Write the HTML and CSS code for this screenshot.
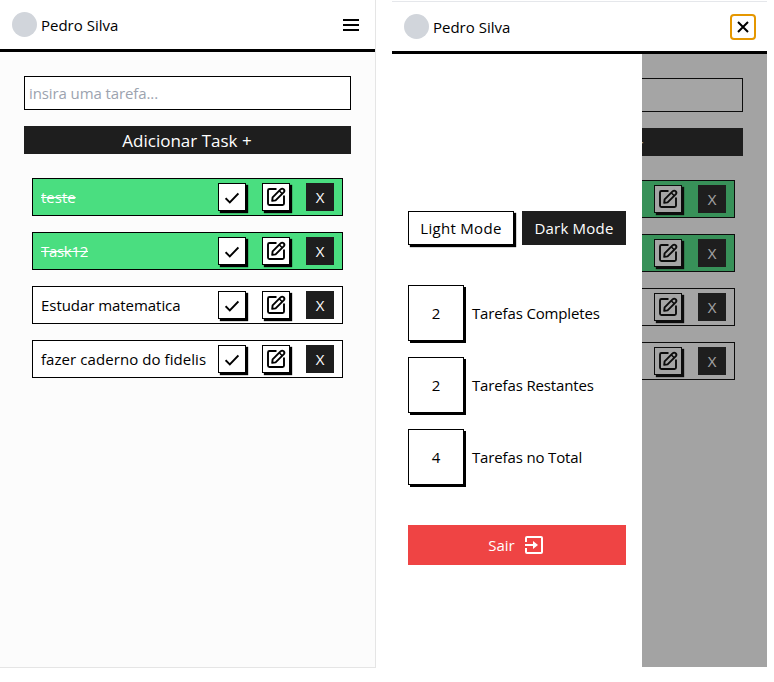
FILE: index.html
```html
<!DOCTYPE html>
<html lang="pt-BR">
<head>
<meta charset="utf-8">
<title>Tarefas</title>
<link rel="stylesheet" href="styles.css">
</head>
<body>
<svg class="defs" aria-hidden="true">
  <symbol id="check" viewBox="0 0 14 12"><path d="M.6 6.200l4.200 4.200L13.400 1.400" fill="none" stroke="currentColor" stroke-width="1.900"/></symbol>
  <symbol id="edit" viewBox="0 0 20 20"><g fill="none" stroke="currentColor" stroke-width="1.900" stroke-linejoin="round"><path d="M10.500 2H3.500Q2 2 2 3.500V16.500Q2 18 3.500 18H16.500Q18 18 18 16.500V8.500"/><path d="M6.200 13.800l.4-3.400 8.200-8.200Q16.200 1 17.600 2.300T17.900 5.100L9.600 13.400z"/><path d="M13.200 3.800l3 3" stroke-width="1.500"/></g></symbol>
</svg>
<main class="screens">
  <section class="phone phone-list">
    <header class="header">
      <span class="avatar"></span><span class="name">Pedro Silva</span>
      <button class="menu" aria-label="Menu"><i></i><i></i><i></i></button>
    </header>
    <div class="content">
      <input class="entry" placeholder="insira uma tarefa...">
      <button class="add"><span>Adicionar Task +</span></button>
      <ul class="tasks">
        <li class="task done"><span class="title">teste</span><button class="tool"><svg class="i-check"><use href="#check"/></svg></button><button class="tool"><svg class="i-edit"><use href="#edit"/></svg></button><button class="del">X</button></li>
        <li class="task done"><span class="title tight">Task12</span><button class="tool"><svg class="i-check"><use href="#check"/></svg></button><button class="tool"><svg class="i-edit"><use href="#edit"/></svg></button><button class="del">X</button></li>
        <li class="task"><span class="title snug">Estudar matematica</span><button class="tool"><svg class="i-check"><use href="#check"/></svg></button><button class="tool"><svg class="i-edit"><use href="#edit"/></svg></button><button class="del">X</button></li>
        <li class="task"><span class="title wide">fazer caderno do fidelis</span><button class="tool"><svg class="i-check"><use href="#check"/></svg></button><button class="tool"><svg class="i-edit"><use href="#edit"/></svg></button><button class="del">X</button></li>
      </ul>
    </div>
  </section>
  <section class="phone phone-drawer">
    <header class="header">
      <span class="avatar"></span><span class="name">Pedro Silva</span>
      <button class="close" aria-label="Fechar"><svg viewBox="0 0 12 12"><path d="M1 1l10 10M11 1L1 11" stroke="#000" stroke-width="2"/></svg></button>
    </header>
    <div class="content">
      <div class="entry"></div>
      <div class="add"><span>Adicionar Task +</span></div>
      <ul class="tasks">
        <li class="task done"><span class="title"></span><button class="tool"><svg class="i-edit"><use href="#edit"/></svg></button><button class="del">X</button></li>
        <li class="task done"><span class="title"></span><button class="tool"><svg class="i-edit"><use href="#edit"/></svg></button><button class="del">X</button></li>
        <li class="task"><span class="title"></span><button class="tool"><svg class="i-edit"><use href="#edit"/></svg></button><button class="del">X</button></li>
        <li class="task"><span class="title"></span><button class="tool"><svg class="i-edit"><use href="#edit"/></svg></button><button class="del">X</button></li>
      </ul>
      <div class="overlay"></div>
      <aside class="drawer">
        <div class="modes"><button class="light">Light Mode</button><button class="dark">Dark Mode</button></div>
        <div class="stats">
          <div class="stat"><b>2</b><span>Tarefas Completes</span></div>
          <div class="stat"><b>2</b><span>Tarefas Restantes</span></div>
          <div class="stat"><b>4</b><span>Tarefas no Total</span></div>
        </div>
        <button class="exit"><span>Sair</span><svg viewBox="0 0 18 18"><path d="M1 6V2Q1 1 2 1H16Q17 1 17 2V16Q17 17 16 17H2Q1 17 1 16V12M0 9H9" fill="none" stroke="#fff" stroke-width="2"/><path d="M8 5l5 4-5 4z" fill="#fff"/></svg></button>
      </aside>
    </div>
  </section>
</main>
</body>
</html>
```
FILE: styles.css
```css
* { box-sizing: border-box; }
body { margin: 0; background: #fff; color: #000; font: 15px/24px "Open Sans", "Noto Sans", sans-serif; overflow: hidden; }
button { font: inherit; color: inherit; border: 0; border-radius: 0; padding: 0; margin: 0; }
.defs { display: none; }
.screens { display: flex; align-items: flex-start; gap: 16px; height: 682px; }
.phone { display: flex; flex-direction: column; }
.phone-list { width: 376px; height: 668px; border-right: 1px solid #e5e5e5; border-bottom: 1px solid #e5e5e5; }
.phone-drawer { width: 375px; height: 666px; margin-top: 1px; border-top: 1px solid #e5e7eb; }
.header { height: 52px; flex: none; display: flex; align-items: center; padding: 0 12px; border-bottom: 3px solid #000; background: #fff; }
.avatar { width: 25px; height: 25px; border-radius: 50%; background: #d1d5db; margin-right: 4px; }
.name { flex: 1; padding-top: 1px; }
.menu { width: 16px; display: flex; flex-direction: column; gap: 3px; margin-right: 4px; background: none; }
.menu i { height: 2px; background: #000; }
.close { width: 26px; height: 26px; margin-right: -1px; border: 2px solid #e59700; border-radius: 4px; background: #fff; display: flex; align-items: center; justify-content: center; }
.close svg { width: 12px; height: 12px; }
.content { position: relative; flex: 1; padding: 24px; background: #fcfcfc; }
.entry { display: block; width: 100%; height: 34px; border: 1px solid #000; border-radius: 0; background: #fff; padding: 0 4px; font: inherit; letter-spacing: -0.1px; outline: 0; }
.entry::placeholder { color: #9ca3af; opacity: 1; }
.add { display: flex; align-items: center; justify-content: center; width: 100%; height: 28px; margin-top: 16px; padding: 2px 1px 0 0; background: #1e1e1e; color: #fff; font-size: 17px; line-height: 26px; }
.tasks { list-style: none; margin: 24px 0 0; padding: 0 8px; display: flex; flex-direction: column; gap: 16px; }
.task { height: 38px; display: flex; align-items: center; border: 1px solid #000; background: #fff; padding: 0 8px; }
.done { background: #4ade80; }
.title { flex: 1; white-space: nowrap; }
.tight { letter-spacing: -0.3px; }
.snug { letter-spacing: -0.05px; }
.wide { letter-spacing: 0.07px; }
.done .title { color: #fff; text-decoration: line-through; }
.tool { width: 28px; height: 28px; flex: none; border: 1px solid #000; background: #fff; box-shadow: 2px 2px 1px #000; margin-right: 16px; display: flex; align-items: center; justify-content: center; }
.i-check { width: 14px; height: 12px; margin-top: 1px; }
.i-edit { width: 20px; height: 20px; }
.del { width: 28px; height: 28px; flex: none; background: #1e1e1e; color: #fff; }
.overlay { position: absolute; inset: 0; background: rgba(30, 30, 30, .4); }
.drawer { position: absolute; top: 0; bottom: 0; left: 0; width: 250px; padding: 157px 16px 0; background: #fff; }
.modes { display: flex; justify-content: space-between; }
.modes button { height: 34px; white-space: nowrap; }
.light { width: 106px; border: 1px solid #000; background: #fff; box-shadow: 2px 2px 1px #000; letter-spacing: 0.3px; }
.dark { width: 104px; background: #1e1e1e; color: #fff; letter-spacing: 0.2px; }
.stats { display: flex; flex-direction: column; gap: 16px; margin-top: 40px; }
.stat { display: flex; align-items: center; gap: 8px; white-space: nowrap; letter-spacing: -0.15px; }
.stat b { width: 56px; height: 56px; border: 1px solid #000; box-shadow: 2px 2px 0 #000; font-weight: 400; line-height: 54px; text-align: center; }
.exit { display: flex; align-items: center; justify-content: center; gap: 10px; width: 100%; height: 40px; margin-top: 40px; padding-right: 3px; background: #ef4444; color: #fff; }
.exit svg { width: 18px; height: 18px; }
```
